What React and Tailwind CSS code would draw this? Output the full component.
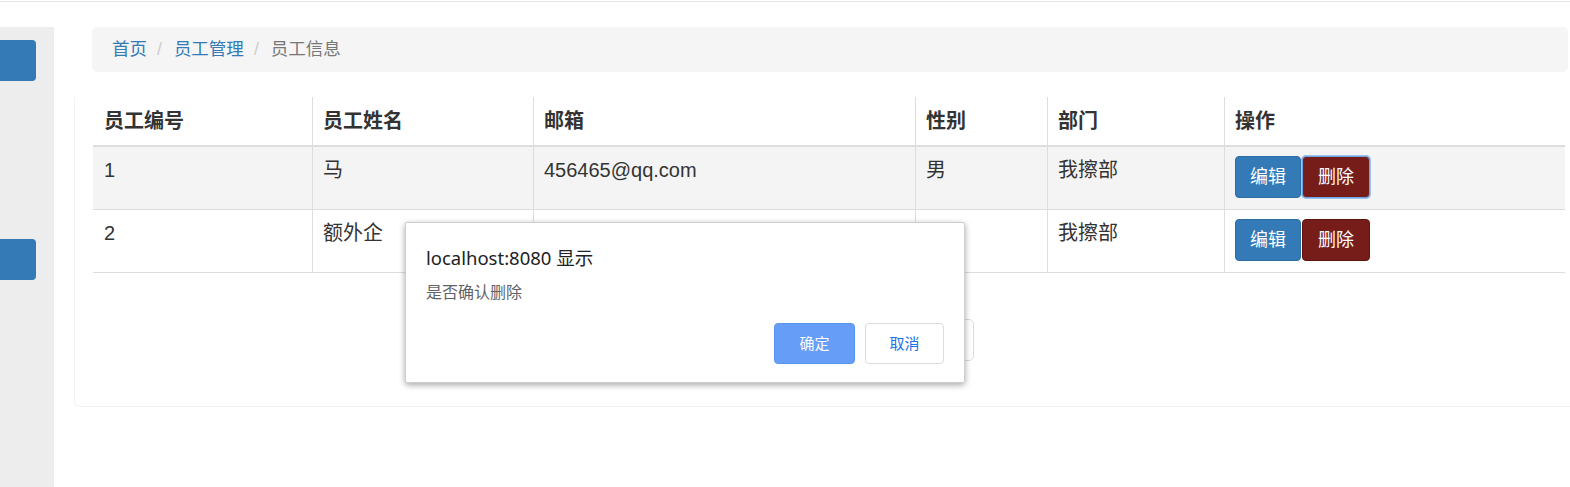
import React from "react";

const cols = "grid grid-cols-[219px_221px_382px_132px_177px_341px]";

function Cell({ children, first, className = "" }) {
  return (
    <div
      className={`border-l ${first ? "border-transparent" : "border-[#dddddd]"} px-[10px] ${className}`}
    >
      {children}
    </div>
  );
}

function Actions({ focused }) {
  return (
    <div className="flex">
      <button className="h-[42px] w-[66px] rounded-[4px] border border-[#2e6da4] bg-[#337ab7] text-[18px] text-white leading-none">
        编辑
      </button>
      <button
        className={`ml-[1px] h-[42px] w-[68px] rounded-[4px] border ${
          focused ? "border-[#6ea6e6] ring-1 ring-[#9cc3ee]" : "border-[#5e1512]"
        } bg-[#761c19] text-[18px] text-white leading-none`}
      >
        删除
      </button>
    </div>
  );
}

export default function App() {
  const rows = [
    { id: "1", name: "马", email: "456465@qq.com", sex: "男", dept: "我擦部", bg: "bg-[#f4f4f4]", focused: true },
    { id: "2", name: "额外企", email: "123456@qq.com", sex: "女", dept: "我擦部", bg: "bg-white", focused: false },
  ];
  return (
    <div className="relative h-[487px] w-[1570px] overflow-hidden bg-white text-[#333333] font-['Liberation_Sans','Noto_Sans_CJK_SC',sans-serif]">
      <div className="h-[1px] bg-white" />
      <div className="h-[1px] bg-[#e4e4e4]" />
      <div className="flex">
        <aside className="mt-[25px] flex h-[470px] w-[54px] shrink-0 flex-col bg-[#ededed]">
          <div className="mt-[13px] h-[41px] w-[36px] rounded-r-[4px] bg-[#337ab7]" />
          <div className="mt-[158px] h-[41px] w-[36px] rounded-r-[4px] bg-[#337ab7]" />
        </aside>
        <main className="flex-1">
          <nav className="ml-[38px] mr-[2px] mt-[25px] flex h-[45px] items-center rounded-[5px] bg-[#f5f5f5] pl-[20px] text-[17.5px]">
            <span className="text-[#337ab7]">首页</span>
            <span className="ml-[10px] mr-[12px] text-[#cccccc]">/</span>
            <span className="text-[#337ab7]">员工管理</span>
            <span className="ml-[10px] mr-[12px] text-[#cccccc]">/</span>
            <span className="text-[#777777]">员工信息</span>
          </nav>
          <section className="ml-[20px] mt-[25px] h-[310px] rounded-bl-[6px] border-b border-l border-[#f2f2f2] pl-[18px]">
            <div className="w-[1472px]">
              <div className={`${cols} h-[50px] border-b-2 border-[#dddddd] text-[20px] font-bold`}>
                {["员工编号", "员工姓名", "邮箱", "性别", "部门", "操作"].map((h, i) => (
                  <Cell key={h} first={i === 0} className="flex items-center">
                    {h}
                  </Cell>
                ))}
              </div>
              {rows.map((r) => (
                <div
                  key={r.id}
                  className={`${cols} h-[63px] border-b border-[#dddddd] text-[20px] leading-[28px] ${r.bg}`}
                >
                  <Cell first className="py-[9px]">{r.id}</Cell>
                  <Cell className="py-[9px]">{r.name}</Cell>
                  <Cell className="py-[9px]">{r.email}</Cell>
                  <Cell className="py-[9px]">{r.sex}</Cell>
                  <Cell className="py-[9px]">{r.dept}</Cell>
                  <Cell className="pt-[9px]">
                    <Actions focused={r.focused} />
                  </Cell>
                </div>
              ))}
            </div>
            <div className="ml-[597px] mt-[46px] flex h-[42px] w-[284px]">
              <span className="h-[42px] w-[56px] rounded-l-[5px] border border-[#dddddd]" />
              <span className="-ml-px h-[42px] w-[68px] border border-[#dddddd]" />
              <span className="-ml-px h-[42px] w-[40px] border border-[#337ab7] bg-[#337ab7]" />
              <span className="-ml-px h-[42px] w-[68px] border border-[#dddddd]" />
              <span className="-ml-px h-[42px] flex-1 rounded-r-[5px] border border-[#dddddd]" />
            </div>
          </section>
        </main>
      </div>

      <div className="absolute left-[405px] top-[222px] flex h-[161px] w-[560px] flex-col rounded-[2px] border border-[#cfcfcf] bg-white px-[20px] pt-[22px] shadow-[0_2px_6px_rgba(0,0,0,0.35)]">
        <div className="text-[18.5px] leading-[26px] text-[#202124] font-['Noto_Sans','Noto_Sans_CJK_SC',sans-serif]">
          localhost:8080 显示
        </div>
        <div className="mt-[10px] text-[16px] leading-[20px] text-[#5f6368] font-['Noto_Sans_CJK_SC',sans-serif]">
          是否确认删除
        </div>
        <div className="mt-[22px] flex justify-end gap-[10px] font-['Noto_Sans_CJK_SC',sans-serif] text-[15px]">
          <button className="h-[41px] w-[81px] rounded-[4px] border border-[#5b94ee] bg-[#669df6] text-white">
            确定
          </button>
          <button className="h-[41px] w-[79px] rounded-[4px] border border-[#dadce0] bg-white text-[#1a73e8]">
            取消
          </button>
        </div>
      </div>
    </div>
  );
}
